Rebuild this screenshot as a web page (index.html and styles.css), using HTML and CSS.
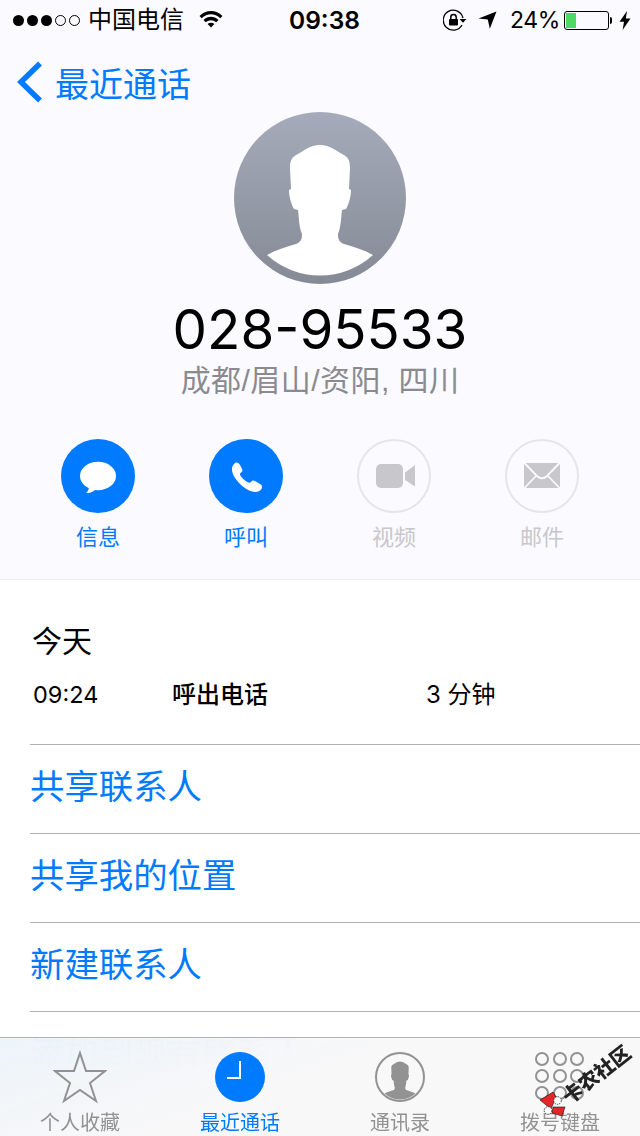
FILE: index.html
```html
<!DOCTYPE html>
<html lang="zh">
<head>
<meta charset="utf-8">
<title>最近通话</title>
<link rel="stylesheet" href="styles.css">
</head>
<body>
<div class="app">
  <header class="top">
    <div class="status">
      <div class="signal"><i class="dot"></i><i class="dot"></i><i class="dot"></i><i class="dot off"></i><i class="dot off"></i></div>
      <span class="carrier">中国电信</span>
      <svg class="wifi" width="24" height="18" viewBox="0 0 24 18"><path d="M0.5 6 C7 -0.8 17 -0.8 23.5 6 L21.3 8.3 C15.8 3 8.2 3 2.7 8.3Z M4.5 10 C9 5.8 15 5.8 19.5 10 L17.3 12.3 C14 9.4 10 9.4 6.7 12.3Z M8.6 14 C10.5 12.4 13.5 12.4 15.4 14 L12 17.6Z" fill="#000"/></svg>
      <span class="clock">09:38</span>
      <div class="status-right">
        <svg class="lock" width="24" height="22" viewBox="0 0 24 22"><path d="M19 16 A10 10 0 1 1 20 9" fill="none" stroke="#000" stroke-width="1.3"/><path d="M16.6 10 H23.4 L20 13.8Z" fill="#000"/><rect x="6" y="10" width="9" height="6.5" rx="1" fill="#000"/><path d="M7.8 10 V8.2 A2.7 2.7 0 0 1 13.2 8.2 V10" fill="none" stroke="#000" stroke-width="1.5"/></svg>
        <svg class="loc" width="19" height="18" viewBox="0 0 19 18"><path d="M18.5 0.5 L11.8 17.8 L9.8 8.6 L0.5 7.5Z" fill="#000"/></svg>
        <span class="pct">24%</span>
        <div class="battery"><div class="charge"></div></div>
        <i class="nub"></i>
        <svg class="bolt" width="12" height="19" viewBox="0 0 12 19"><path d="M8 0 L0.5 10.8 H5 L3.6 19 L11.5 7.6 H6.8Z" fill="#000"/></svg>
      </div>
    </div>
    <nav class="nav">
      <svg class="chevron" width="26" height="42" viewBox="0 0 26 42"><path d="M23 2.5 L4 21 L23 39.5" fill="none" stroke="#007aff" stroke-width="5.5"/></svg>
      <span class="back">最近通话</span>
    </nav>
    <svg class="avatar" width="172" height="172" viewBox="0 0 172 172">
      <defs><linearGradient id="ag" x1="0" y1="0" x2="0" y2="1"><stop offset="0" stop-color="#a5abba"/><stop offset="1" stop-color="#858a95"/></linearGradient></defs>
      <circle cx="86" cy="86" r="86" fill="url(#ag)"/>
      <path d="M86 33 C76 33 70 39 62 43 C57 46 56 50 56 56 L57 77 L55 78 C55 84 57 92 60 97 L64 98 C65 106 65 115 68 122 C68 127 67 130 62 132 C52 135 42 138 33 143 A79 79 0 0 0 139 143 C130 138 120 135 110 132 C105 130 104 127 104 122 C107 115 107 106 108 98 L112 97 C115 92 117 84 117 78 L115 77 L116 56 C116 50 115 46 110 43 C102 39 96 33 86 33Z" fill="#fff"/>
    </svg>
    <h1 class="number">028-95533</h1>
    <p class="region">成都/眉山/资阳, 四川</p>
    <div class="actions">
      <div class="action">
        <div class="disc on"><svg width="74" height="74" viewBox="0 0 74 74"><ellipse cx="37" cy="37" rx="18" ry="14.2" fill="#fff"/><path d="M28 47 C28 50 27 52.5 25 54 C29 54.5 32 53 35 50Z" fill="#fff"/></svg></div>
        <span class="label blue">信息</span>
      </div>
      <div class="action">
        <div class="disc on"><svg width="74" height="74" viewBox="0 0 74 74"><path d="M26 24 C28 23 30 24 31 26 L33 30 C34 32 33 33 31.5 34 C30.5 35 31 36 32 37.5 C34 40 36 42 38.5 43 C40 44 41 44 42 43 C43 41.5 44 41 46 42 L51 45 C53 46 53.5 48 52.5 50 C51 52 48 53.5 46 53 C38 52 31 46 26 39 C23 34 21 28 26 24Z" fill="#fff"/></svg></div>
        <span class="label blue">呼叫</span>
      </div>
      <div class="action">
        <div class="disc off"><svg width="70" height="70" viewBox="2 2 70 70"><rect x="19" y="25" width="27" height="24" rx="5" fill="#c8c7cc"/><path d="M48 33.5 L58 26 V47.5 L48 41Z" fill="#c8c7cc"/></svg></div>
        <span class="label grey">视频</span>
      </div>
      <div class="action">
        <div class="disc off"><svg width="70" height="70" viewBox="2 2 70 70"><rect x="19" y="24" width="36" height="25" fill="#c8c7cc"/><path d="M18 22.5 L32 37 Q37 41.5 42 37 L56 22.5 M18 50.5 L31 37 M56 50.5 L43 37" fill="none" stroke="#fbfaff" stroke-width="1.8"/></svg></div>
        <span class="label grey">邮件</span>
      </div>
    </div>
  </header>
  <section class="log">
    <div class="day">今天</div>
    <div class="call"><span class="call-time">09:24</span><span class="call-type">呼出电话</span><span class="call-len">3 分钟</span></div>
  </section>
  <ul class="links">
    <li class="link">共享联系人</li>
    <li class="link">共享我的位置</li>
    <li class="link">新建联系人</li>
    <li class="link">添加到现有联系人</li>
  </ul>
  <footer class="tabs">
    <div class="tab">
      <svg width="54" height="54" viewBox="0 0 54 54"><path d="M27 3 L33 21 L52 21 L37 33 L43 51 L27 40 L11 51 L17 33 L2 21 L21 21Z" fill="none" stroke="#929292" stroke-width="2"/></svg>
      <span class="tab-label">个人收藏</span>
    </div>
    <div class="tab active">
      <svg width="54" height="54" viewBox="0 0 54 54"><circle cx="27" cy="27" r="25" fill="#007aff"/><path d="M27 11 V28 H14" fill="none" stroke="#fff" stroke-width="2"/></svg>
      <span class="tab-label">最近通话</span>
    </div>
    <div class="tab">
      <svg width="54" height="54" viewBox="0 0 54 54"><g transform="translate(2 2) scale(.2907)"><path d="M86 33 C76 33 70 39 62 43 C57 46 56 50 56 56 L57 77 L55 78 C55 84 57 92 60 97 L64 98 C65 106 65 115 68 122 C68 127 67 130 62 132 C52 135 42 138 33 143 A79 79 0 0 0 139 143 C130 138 120 135 110 132 C105 130 104 127 104 122 C107 115 107 106 108 98 L112 97 C115 92 117 84 117 78 L115 77 L116 56 C116 50 115 46 110 43 C102 39 96 33 86 33Z" fill="#929292"/></g><circle cx="27" cy="27" r="24" fill="none" stroke="#929292" stroke-width="2"/></svg>
      <span class="tab-label">通讯录</span>
    </div>
    <div class="tab">
      <svg width="54" height="54" viewBox="0 0 54 54"><g fill="none" stroke="#929292" stroke-width="2"><circle cx="9" cy="9" r="6"/><circle cx="27" cy="9" r="6"/><circle cx="44" cy="9" r="6"/><circle cx="9" cy="26" r="6"/><circle cx="27" cy="26" r="6"/><circle cx="44" cy="26" r="6"/><circle cx="9" cy="43" r="6"/><circle cx="27" cy="43" r="6"/><circle cx="44" cy="43" r="6"/></g></svg>
      <span class="tab-label">拨号键盘</span>
    </div>
  </footer>
  <svg class="mark-logo" width="30" height="30" viewBox="0 0 30 30"><path d="M2 10 L15 2 L18 7 L13 19Z M15 17 L27 17 L24 26 L14 23Z" fill="#e3262a" stroke="#111" stroke-width=".6"/><circle cx="19.5" cy="10.5" r="3.8" fill="#fff" stroke="#111" stroke-width=".8" stroke-dasharray="1.5 1"/><circle cx="10" cy="20.5" r="3.8" fill="#fff" stroke="#111" stroke-width=".8" stroke-dasharray="1.5 1"/></svg>
  <span class="mark-text">卡农社区</span>
</div>
</body>
</html>
```
FILE: styles.css
```css
* { box-sizing: border-box; }
html, body { margin: 0; padding: 0; background: #fff; }
body { font-family: "Liberation Sans", "Noto Sans CJK SC", sans-serif; }
.app { position: relative; width: 640px; height: 1136px; overflow: hidden; background: #fff; }

.top { height: 580px; background: #fbfaff; border-bottom: 1px solid #ececf0; display: flex; flex-direction: column; align-items: center; }

.status { position: relative; width: 100%; height: 40px; display: flex; align-items: center; padding-left: 13px; color: #000; }
.signal { display: flex; gap: 3px; width: 75px; }
.dot { width: 11px; height: 11px; border-radius: 50%; background: #000; }
.dot.off { background: none; border: 1px solid #000; }
.carrier { font-size: 24px; line-height: 40px; }
.wifi { margin-left: 15px; margin-top: -2px; }
.clock { position: absolute; left: 289px; top: 0; font-family: "Inter", sans-serif; font-size: 24.5px; font-weight: 600; line-height: 40px; }
.status-right { margin-left: auto; display: flex; align-items: center; height: 40px; }
.lock { margin-right: 11px; }
.loc { margin-right: 13px; }
.pct { width: 47px; font-family: "Inter", sans-serif; font-size: 23px; letter-spacing: -.4px; line-height: 40px; margin-right: 7px; white-space: nowrap; }
.battery { width: 45px; height: 19px; border: 1px solid #000; border-radius: 3px; padding: 1px; }
.charge { width: 10px; height: 15px; background: #4cd964; }
.nub { width: 2px; height: 7px; background: #000; margin: 0 7px 0 1px; border-radius: 0 2px 2px 0; }
.bolt { margin-right: 9px; }

.nav { width: 100%; height: 72px; padding: 12px 0 0 17px; display: flex; align-items: center; gap: 12px; }
.chevron { flex: none; }
.back { font-size: 34px; color: #007aff; }

.avatar { display: block; flex: none; }
.number { margin: 10px 0 0; height: 70px; font-family: "Inter", sans-serif; font-size: 54.7px; line-height: 70px; font-weight: 400; color: #000; white-space: nowrap; }
.region { margin: 0; height: 34px; font-size: 30px; line-height: 34px; letter-spacing: .45px; color: #8a8a8f; }

.actions { margin-top: 41px; width: 592px; display: grid; grid-template-columns: repeat(4, 148px); }
.action { display: flex; flex-direction: column; align-items: center; }
.disc { width: 74px; height: 74px; border-radius: 50%; }
.disc svg { display: block; }
.disc.on { background: #007aff; }
.disc.off { border: 2px solid #e5e5ea; }
.label { margin-top: 10px; font-size: 22px; line-height: 30px; }
.blue { color: #007aff; }
.grey { color: #c8c7cc; }

.log { padding: 46px 0 33px 32px; color: #000; }
.day { font-size: 30px; line-height: 32px; }
.call { margin-top: 21px; display: grid; grid-template-columns: 140px 254px auto; font-size: 24px; line-height: 32px; }
.call-time { padding-left: 1px; font-family: "Inter", sans-serif; font-size: 23.5px; }
.call-type { font-weight: 500; }
.call-len { font-family: "Inter", "Noto Sans CJK SC", sans-serif; }

.links { list-style: none; margin: 0 0 0 30px; padding: 0; }
.link { height: 89px; border-top: 1px solid #b0b0b0; font-size: 34.4px; line-height: 84px; color: #007aff; }

.tabs { position: absolute; left: 0; right: 0; bottom: 0; height: 99px; padding-top: 12px; border-top: 1px solid #b0b0b0; display: grid; grid-template-columns: repeat(4, 160px); background: linear-gradient(160deg, rgba(236,243,249,.97), rgba(248,248,249,.98) 45%); backdrop-filter: blur(30px); }
.tab { display: flex; flex-direction: column; align-items: center; }
.tab svg { display: block; margin-bottom: 6px; }
.tab-label { font-size: 20px; line-height: 26px; color: #929292; }
.tab.active .tab-label { color: #007aff; }

.mark-logo { position: absolute; left: 538px; top: 1090px; }
.mark-text { position: absolute; left: 556px; top: 1060px; font-family: "Noto Sans CJK SC", sans-serif; font-size: 20px; line-height: 28px; font-weight: 900; color: #222; white-space: nowrap; transform: rotate(-38deg); }
```
